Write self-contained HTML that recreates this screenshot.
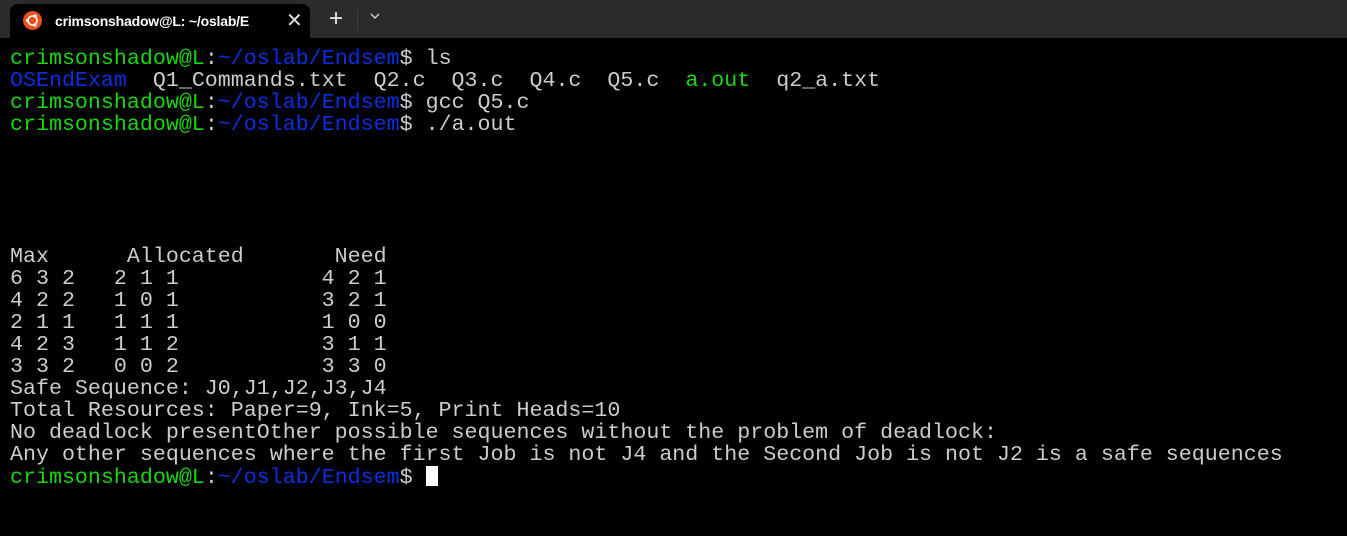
<!DOCTYPE html>
<html><head><style>
body{margin:0;width:1347px;height:536px;background:#000;overflow:hidden;position:relative;font-family:"Liberation Sans",sans-serif}
.bar{position:absolute;left:0;top:0;width:1347px;height:38px;background:#2b2b2b}
.tab{position:absolute;left:10px;top:4px;width:300px;height:34px;background:#000;border-radius:8px 8px 0 0}
.ic{position:absolute;left:13px;top:7px;width:19px;height:19px;border-radius:50%;background:#e9501f}
.tt{position:absolute;left:45px;top:9px;color:#fff;font-size:14px;font-weight:bold;letter-spacing:-0.2px}
.x{position:absolute;left:276px;top:4px;color:#ddd;font-size:20px}
.plus{position:absolute;left:329px;top:5px;color:#eee;font-size:24px}
.sep{position:absolute;left:357px;top:10px;width:1px;height:20px;background:#444}
.chev{position:absolute;left:369px;top:10px}
pre{position:absolute;left:10px;top:48px;margin:0;font-family:"Liberation Mono",monospace;font-size:21.65px;line-height:22px;color:#cccccc}
.g{color:#16d60c}.b{color:#0a2ee0}
.cur{display:inline-block;width:12px;height:20px;background:#fff;vertical-align:-3px}
</style></head><body>
<div class="bar"><div class="tab"><div class="ic"><svg width="19" height="19" viewBox="0 0 19 19"><circle cx="9.5" cy="9.5" r="4.5" fill="none" stroke="#fff" stroke-width="1.6"/><circle cx="4.5" cy="9.5" r="1.6" fill="#fff"/><circle cx="12" cy="5" r="1.6" fill="#fff"/><circle cx="12" cy="14" r="1.6" fill="#fff"/></svg></div><div class="tt">crimsonshadow@L: ~/oslab/E</div><div class="x">✕</div></div>
<div class="plus">+</div><div class="sep"></div>
<svg class="chev" width="12" height="12" viewBox="0 0 12 12"><path d="M2 4l4 4 4-4" fill="none" stroke="#ddd" stroke-width="1.3"/></svg></div>
<pre><span class="g">crimsonshadow@L</span>:<span class="b">~/oslab/Endsem</span>$ ls
<span class="b">OSEndExam</span>  Q1_Commands.txt  Q2.c  Q3.c  Q4.c  Q5.c  <span class="g">a.out</span>  q2_a.txt
<span class="g">crimsonshadow@L</span>:<span class="b">~/oslab/Endsem</span>$ gcc Q5.c
<span class="g">crimsonshadow@L</span>:<span class="b">~/oslab/Endsem</span>$ ./a.out





Max      Allocated       Need
6 3 2   2 1 1           4 2 1
4 2 2   1 0 1           3 2 1
2 1 1   1 1 1           1 0 0
4 2 3   1 1 2           3 1 1
3 3 2   0 0 2           3 3 0
Safe Sequence: J0,J1,J2,J3,J4
Total Resources: Paper=9, Ink=5, Print Heads=10
No deadlock presentOther possible sequences without the problem of deadlock:
Any other sequences where the first Job is not J4 and the Second Job is not J2 is a safe sequences
<span class="g">crimsonshadow@L</span>:<span class="b">~/oslab/Endsem</span>$ <span class="cur"></span></pre>
</body></html>
